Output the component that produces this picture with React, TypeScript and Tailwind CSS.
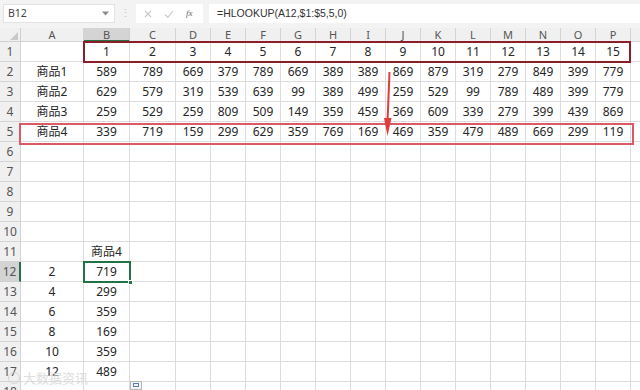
import React from 'react';

const cols = ['A', 'B', 'C', 'D', 'E', 'F', 'G', 'H', 'I', 'J', 'K', 'L', 'M', 'N', 'O', 'P', 'Q'];

// sheet rows, index 0 = row 1
const sheet: (string | number)[][] = [
  ['', 1, 2, 3, 4, 5, 6, 7, 8, 9, 10, 11, 12, 13, 14, 15],
  ['商品1', 589, 789, 669, 379, 789, 669, 389, 389, 869, 879, 319, 279, 849, 399, 779],
  ['商品2', 629, 579, 319, 539, 639, 99, 389, 499, 259, 529, 99, 789, 489, 399, 779],
  ['商品3', 259, 529, 259, 809, 509, 149, 359, 459, 369, 609, 339, 279, 399, 439, 869],
  ['商品4', 339, 719, 159, 299, 629, 359, 769, 169, 469, 359, 479, 489, 669, 299, 119],
  [],
  [],
  [],
  [],
  [],
  ['', '商品4'],
  [2, 719],
  [4, 299],
  [6, 359],
  [8, 169],
  [10, 359],
  [12, 489],
  [],
];

function FormulaBar() {
  return (
    <div className="h-[28px] bg-[#f3f3f3] flex items-start pt-[4px]">
      <div className="ml-[3px] w-[112px] h-[19px] bg-white border border-[#e3e3e3] flex items-center justify-between pl-[4px] pr-[5px]">
        <span className="text-[10.5px] text-[#444]">B12</span>
        <svg width="7" height="5" viewBox="0 0 7 5">
          <path d="M0 0.5h7L3.5 4.5z" fill="#8a8a8a" />
        </svg>
      </div>
      <div className="w-[21px] h-[19px] flex items-center justify-center text-[#c4c4c4] text-[11px]">⋮</div>
      <div className="w-[67px] h-[19px] bg-white flex items-center gap-[12px] pl-[8px]">
        <svg width="8" height="8" viewBox="0 0 8 8">
          <path d="M1 1l6 6M7 1L1 7" stroke="#c8c8c8" strokeWidth="1.1" />
        </svg>
        <svg width="10" height="8" viewBox="0 0 10 8">
          <path d="M1 4.5l2.8 2.8L9 1" stroke="#c8c8c8" strokeWidth="1.1" fill="none" />
        </svg>
        <span className="text-[9px] italic text-[#666] font-['Liberation_Serif',serif]">fx</span>
      </div>
      <div className="ml-[6px] flex-1 h-[19px] bg-white flex items-center pl-[8px]">
        <span className="text-[10.5px] text-[#333] font-['Liberation_Sans_Narrow','Liberation_Sans',sans-serif]">
          =HLOOKUP(A12,$1:$5,5,0)
        </span>
      </div>
    </div>
  );
}

export default function App() {
  return (
    <div className="relative w-[640px] h-[390px] overflow-hidden bg-white font-['Noto_Sans','Noto_Sans_CJK_SC',sans-serif]">
      <FormulaBar />

      <div className="grid grid-cols-[21px_63px_46px_46px_repeat(14,35px)] grid-rows-[14px_repeat(18,20px)]">
        {/* corner */}
        <div className="bg-[#f0f0f0] border-r border-b border-[#cfcfcf] flex items-end justify-end pr-[2px] pb-[1px]">
          <svg width="8" height="8" viewBox="0 0 8 8">
            <path d="M8 0V8H0z" fill="#c9c9c9" />
          </svg>
        </div>
        {cols.map((c) => (
          <div
            key={c}
            className={
              c === 'B'
                ? 'bg-[#d4d4d4] border-r border-b-2 border-r-[#cfcfcf] border-b-[#217346] text-[11px] leading-[13px] text-[#555] text-center'
                : 'bg-[#f0f0f0] border-r border-b border-[#d4d4d4] text-[11px] leading-[13px] text-[#555] text-center'
            }
          >
            {c === 'Q' ? '' : c}
          </div>
        ))}

        {sheet.map((row, r) => (
          <React.Fragment key={r}>
            <div
              className={
                r === 11
                  ? 'bg-[#d4d4d4] border-r-2 border-b border-r-[#217346] border-b-[#cfcfcf] text-[12px] text-[#555] flex items-center justify-center'
                  : 'bg-[#f0f0f0] border-r border-b border-[#d4d4d4] text-[12px] text-[#555] flex items-center justify-center'
              }
            >
              {r + 1}
            </div>
            {cols.map((c, ci) => (
              <div
                key={c}
                className="border-r border-b border-[#dcdcdc] text-[12px] text-[#262626] flex items-center justify-center"
              >
                {row[ci] ?? ''}
              </div>
            ))}
          </React.Fragment>
        ))}
      </div>

      {/* row 1 lookup range */}
      <div className="absolute left-[83px] top-[41px] w-[548px] h-[22px] border-2 border-[#8e1d2a]" />
      {/* row 5 result row */}
      <div className="absolute left-[19px] top-[123px] w-[615px] h-[22px] border-2 border-[#dc5a64]" />

      {/* arrow */}
      <svg className="absolute left-[378px] top-[68px]" width="20" height="72" viewBox="0 0 20 72">
        <path d="M11.5 4L9.6 52" stroke="#e23c3c" strokeWidth="2" />
        <path d="M6 50h7.5L9.5 68z" fill="#e23c3c" />
      </svg>

      {/* selected cell B12 */}
      <div className="absolute left-[83px] top-[261px] w-[48px] h-[22px] border-2 border-[#217346]" />
      <div className="absolute left-[128px] top-[280px] w-[5px] h-[5px] bg-[#217346] border border-white" />

      {/* paste options */}
      <div className="absolute left-[130px] top-[381px] w-[12px] h-[9px] bg-[#f4f4f4] border border-[#b8b8b8] flex items-start justify-center pt-[1px]">
        <div className="w-[6px] h-[4px] border border-[#5a7fb5]" />
      </div>

      {/* watermark */}
      <div className="absolute left-[8px] top-[368px] flex items-center gap-[3px] opacity-80">
        <div className="w-[12px] h-[12px] rounded-full border border-[#d0d0d0]" />
        <span className="text-[13px] text-[#d6d6d6] font-['Noto_Sans_CJK_SC',sans-serif]">大数据资讯</span>
      </div>
    </div>
  );
}
